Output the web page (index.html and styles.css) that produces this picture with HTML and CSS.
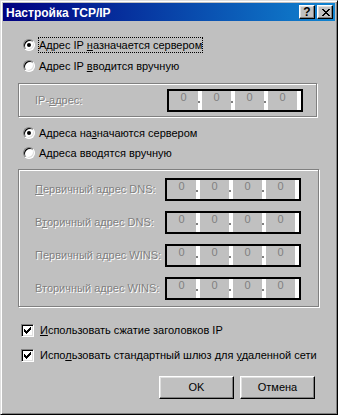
FILE: index.html
```html
<!DOCTYPE html>
<html lang="ru">
<head>
<meta charset="utf-8">
<title>Настройка TCP/IP</title>
<link rel="stylesheet" href="styles.css">
</head>
<body>
<div class="window">
  <div class="titlebar">
    <span class="title">Настройка TCP/IP</span>
    <div class="caption-buttons">
      <span class="cap-btn help">?</span>
      <span class="cap-btn close">
        <svg width="8" height="7" viewBox="0 0 8 7" shape-rendering="crispEdges"><path fill="#000" d="M0 0h2v1h-2zM6 0h2v1h-2zM1 1h2v1h-2zM5 1h2v1h-2zM2 2h4v1h-4zM3 3h2v1h-2zM2 4h4v1h-4zM1 5h2v1h-2zM5 5h2v1h-2zM0 6h2v1h-2zM6 6h2v1h-2z"/></svg>
      </span>
    </div>
  </div>
  <div class="content">
    <div class="option">
      <span class="radio checked"></span>
      <span class="label focus">Адрес IP <u>н</u>азначается сервером</span>
    </div>
    <div class="option gap5">
      <span class="radio"></span>
      <span class="label">Адрес IP <u>в</u>водится вручную</span>
    </div>
    <div class="group g1">
      <div class="field-row">
        <span class="flabel disabled">IP-<u>а</u>дрес:</span>
        <div class="ipfield">
          <span class="oct">0</span><span class="sep"><i class="dot"></i></span>
          <span class="oct">0</span><span class="sep"><i class="dot"></i></span>
          <span class="oct">0</span><span class="sep"><i class="dot"></i></span>
          <span class="oct">0</span><span class="sep"></span>
        </div>
      </div>
    </div>
    <div class="option gap8">
      <span class="radio checked"></span>
      <span class="label">Адреса на<u>з</u>начаются сервером</span>
    </div>
    <div class="option gap4">
      <span class="radio"></span>
      <span class="label">Адреса вво<u>д</u>ятся вручную</span>
    </div>
    <div class="group g2">
      <div class="field-row">
        <span class="flabel disabled"><u>П</u>ервичный адрес DNS:</span>
        <div class="ipfield">
          <span class="oct">0</span><span class="sep"><i class="dot"></i></span>
          <span class="oct">0</span><span class="sep"><i class="dot"></i></span>
          <span class="oct">0</span><span class="sep"><i class="dot"></i></span>
          <span class="oct">0</span><span class="sep"></span>
        </div>
      </div>
      <div class="field-row">
        <span class="flabel disabled">В<u>т</u>оричный адрес DNS:</span>
        <div class="ipfield">
          <span class="oct">0</span><span class="sep"><i class="dot"></i></span>
          <span class="oct">0</span><span class="sep"><i class="dot"></i></span>
          <span class="oct">0</span><span class="sep"><i class="dot"></i></span>
          <span class="oct">0</span><span class="sep"></span>
        </div>
      </div>
      <div class="field-row">
        <span class="flabel disabled">Первичный адрес WINS:</span>
        <div class="ipfield">
          <span class="oct">0</span><span class="sep"><i class="dot"></i></span>
          <span class="oct">0</span><span class="sep"><i class="dot"></i></span>
          <span class="oct">0</span><span class="sep"><i class="dot"></i></span>
          <span class="oct">0</span><span class="sep"></span>
        </div>
      </div>
      <div class="field-row">
        <span class="flabel disabled">Вторичный адрес WINS:</span>
        <div class="ipfield">
          <span class="oct">0</span><span class="sep"><i class="dot"></i></span>
          <span class="oct">0</span><span class="sep"><i class="dot"></i></span>
          <span class="oct">0</span><span class="sep"><i class="dot"></i></span>
          <span class="oct">0</span><span class="sep"></span>
        </div>
      </div>
    </div>
    <div class="check-row gap15">
      <span class="checkbox"><svg width="7" height="7" viewBox="0 0 7 7" shape-rendering="crispEdges"><path fill="#000" d="M6 0h1v3h-1v1h-1v1h-1v1h-1v1h-1v-1h-1v-1h-1v-3h1v1h1v1h1v-1h1v-1h1v-1h1z"/></svg></span>
      <span class="label"><u>И</u>спользовать сжатие заголовков IP</span>
    </div>
    <div class="check-row gap9">
      <span class="checkbox"><svg width="7" height="7" viewBox="0 0 7 7" shape-rendering="crispEdges"><path fill="#000" d="M6 0h1v3h-1v1h-1v1h-1v1h-1v1h-1v-1h-1v-1h-1v-3h1v1h1v1h1v-1h1v-1h1v-1h1z"/></svg></span>
      <span class="label">Испо<u>л</u>ьзовать стандартный шлюз для <u>у</u>даленной сети</span>
    </div>
    <div class="buttons">
      <span class="btn">OK</span>
      <span class="btn">Отмена</span>
    </div>
  </div>
</div>
</body>
</html>
```

FILE: styles.css
```css
html, body {
  margin: 0;
  padding: 0;
}

body {
  width: 338px;
  height: 415px;
  overflow: hidden;
  background: #c0c0c0;
  font-family: "Liberation Sans", Arial, sans-serif;
  font-size: 11px;
  color: #000;
}

.window {
  box-sizing: border-box;
  width: 338px;
  height: 415px;
  background: #c0c0c0;
  border: 1px solid;
  border-color: #dfdfdf #000 #000 #dfdfdf;
  box-shadow: inset 1px 1px 0 #fff, inset -1px -1px 0 #808080;
  padding: 2px;
  display: flex;
  flex-direction: column;
}

.titlebar {
  height: 18px;
  flex: none;
  display: flex;
  align-items: flex-start;
  padding: 0 2px 0 3px;
  background: linear-gradient(to right, #000080, #1084d0);
}

.title {
  color: #fff;
  font-weight: bold;
  font-size: 12px;
  line-height: 14px;
  margin-top: 3px;
  white-space: nowrap;
}

.caption-buttons {
  margin-left: auto;
  margin-top: 2px;
  display: flex;
  gap: 2px;
}

.cap-btn {
  box-sizing: border-box;
  width: 16px;
  height: 14px;
  background: #c0c0c0;
  border: 1px solid;
  border-color: #fff #000 #000 #fff;
  box-shadow: inset -1px -1px 0 #808080, inset 1px 1px 0 #dfdfdf;
  display: flex;
  align-items: center;
  justify-content: center;
}

.help {
  font-weight: bold;
  font-size: 12px;
  line-height: 12px;
}

.close svg {
  display: block;
  margin-left: 1px;
}

.content {
  flex: 1;
  display: flex;
  flex-direction: column;
  padding-top: 16px;
}

.option {
  display: flex;
  align-items: center;
  height: 16px;
  padding-left: 20px;
}

.gap4 { margin-top: 4px; }
.gap5 { margin-top: 5px; }
.gap8 { margin-top: 8px; }
.gap9 { margin-top: 9px; }
.gap15 { margin-top: 15px; }

.radio {
  position: relative;
  box-sizing: border-box;
  width: 12px;
  height: 12px;
  flex: none;
  border-radius: 50%;
  border: 1px solid;
  border-color: #808080 #fff #fff #808080;
  background: #fff;
  box-shadow: inset 1px 1px 0 #000, inset -1px -1px 0 #dfdfdf;
  margin-right: 3px;
}

.radio.checked::after {
  content: "";
  position: absolute;
  left: 3px;
  top: 3px;
  width: 4px;
  height: 4px;
  border-radius: 50%;
  background: #000;
}

.label {
  border: 1px dotted transparent;
  padding: 1px 0;
  line-height: 12px;
  white-space: nowrap;
}

.label.focus {
  border-color: #000;
}

.group {
  box-sizing: border-box;
  margin-left: 15px;
  border: 1px solid #808080;
  box-shadow: inset 1px 1px 0 #fff, 1px 1px 0 #fff;
  display: flex;
  flex-direction: column;
}

.g1 {
  width: 299px;
  margin-top: 9px;
  padding: 5px 13px 4px 16px;
}

.g2 {
  width: 301px;
  margin-top: 8px;
  padding: 8px 17px 6px 16px;
  gap: 10px;
}

.field-row {
  display: flex;
  align-items: center;
  justify-content: space-between;
}

.flabel {
  line-height: 13px;
  white-space: nowrap;
}

.disabled {
  color: #808080;
  text-shadow: 1px 1px 0 #fff;
}

.ipfield {
  box-sizing: border-box;
  width: 136px;
  height: 23px;
  border: 2px solid #000;
  display: flex;
}

.oct {
  width: 29px;
  background: #c0c0c0;
  color: #808080;
  text-align: center;
  line-height: 13px;
}

.sep {
  width: 4px;
  background: #fff;
}

.dot {
  display: block;
  width: 2px;
  height: 2px;
  margin-top: 10px;
  background: #808080;
}

.check-row {
  display: flex;
  align-items: center;
  height: 16px;
  padding-left: 18px;
}

.checkbox {
  box-sizing: border-box;
  width: 13px;
  height: 13px;
  flex: none;
  border: 1px solid;
  border-color: #808080 #fff #fff #808080;
  background: #fff;
  box-shadow: inset 1px 1px 0 #000, inset -1px -1px 0 #dfdfdf;
  margin-right: 5px;
  display: flex;
  align-items: center;
  justify-content: center;
}

.checkbox svg {
  display: block;
}

.buttons {
  display: flex;
  justify-content: flex-end;
  gap: 6px;
  padding-right: 20px;
  margin-top: 13px;
}

.btn {
  box-sizing: border-box;
  width: 75px;
  height: 23px;
  border: 1px solid;
  border-color: #fff #000 #000 #fff;
  box-shadow: inset -1px -1px 0 #808080, inset 1px 1px 0 #dfdfdf;
  display: flex;
  align-items: center;
  justify-content: center;
  padding-bottom: 2px;
}
```
